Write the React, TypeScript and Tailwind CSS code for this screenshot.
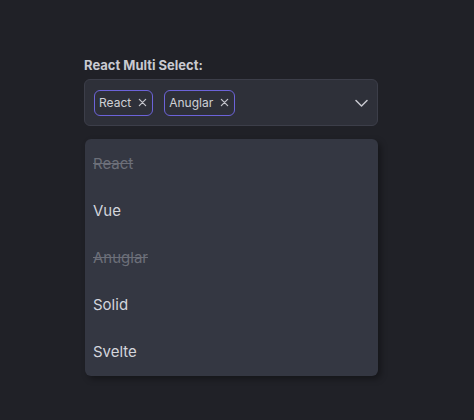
import {useState} from "react";

const OPTIONS = ["React", "Vue", "Anuglar", "Solid", "Svelte"];

function XIcon() {
    return (
        <svg width="9" height="9" viewBox="0 0 10 10" fill="none" stroke="currentColor" strokeWidth="1.4" strokeLinecap="round">
            <path d="M1.5 1.5 8.5 8.5M8.5 1.5 1.5 8.5"/>
        </svg>
    );
}

function Chevron() {
    return (
        <svg width="13" height="8" viewBox="0 0 13 8" fill="none" stroke="currentColor" strokeWidth="1.5" strokeLinecap="round" strokeLinejoin="round">
            <path d="M1 1.5l5.5 5.5 5.5-5.5"/>
        </svg>
    );
}

export default function App() {
    const [selected, setSelected] = useState<string[]>(["React", "Anuglar"]);

    const toggle = (name: string) => {
        setSelected((prev) => prev.includes(name) ? prev.filter((s) => s !== name) : [...prev, name]);
    };

    return (
        <div className="w-full h-[420px] bg-[#202127] pl-[84px] pt-[57px] font-['Inter',sans-serif]">
            <div className="w-[294px]">
                <p className="text-[13px] leading-[16px] font-bold text-[#c9cad1]">React Multi Select:</p>

                {/* select box */}
                <div className="mt-[6px] h-[47px] flex items-center justify-between pl-[9px] pr-[9px] bg-[#2e3039] border border-[#3c3e49] rounded-md">
                    <div className="flex gap-[11px]">
                        {selected.map((s) => (
                            <span
                                key={s}
                                className="h-[26px] flex items-center gap-[7px] pl-[4px] pr-[5px] border-[1.5px] border-[#6c63d9] rounded-md text-[12px] text-[#cfd0d6]"
                            >
                                {s}
                                <button onClick={() => toggle(s)} className="text-[#c3c4cb] flex items-center">
                                    <XIcon/>
                                </button>
                            </span>
                        ))}
                    </div>
                    <span className="text-[#c7c8cf]">
                        <Chevron/>
                    </span>
                </div>

                {/* dropdown */}
                <ul className="mt-[13px] ml-px pt-[2px] bg-[#343742] rounded-md shadow-[3px_3px_6px_rgba(0,0,0,0.35)]">
                    {OPTIONS.map((o) => {
                        const isOn = selected.includes(o);
                        return (
                            <li
                                key={o}
                                onClick={() => toggle(o)}
                                className={
                                    isOn
                                        ? "h-[47px] flex items-center px-2 text-[15px] text-[#6c6f79] line-through cursor-pointer"
                                        : "h-[47px] flex items-center px-2 text-[15px] text-[#d3d5dc] cursor-pointer"
                                }
                            >
                                {o}
                            </li>
                        );
                    })}
                </ul>
            </div>
        </div>
    );
}
